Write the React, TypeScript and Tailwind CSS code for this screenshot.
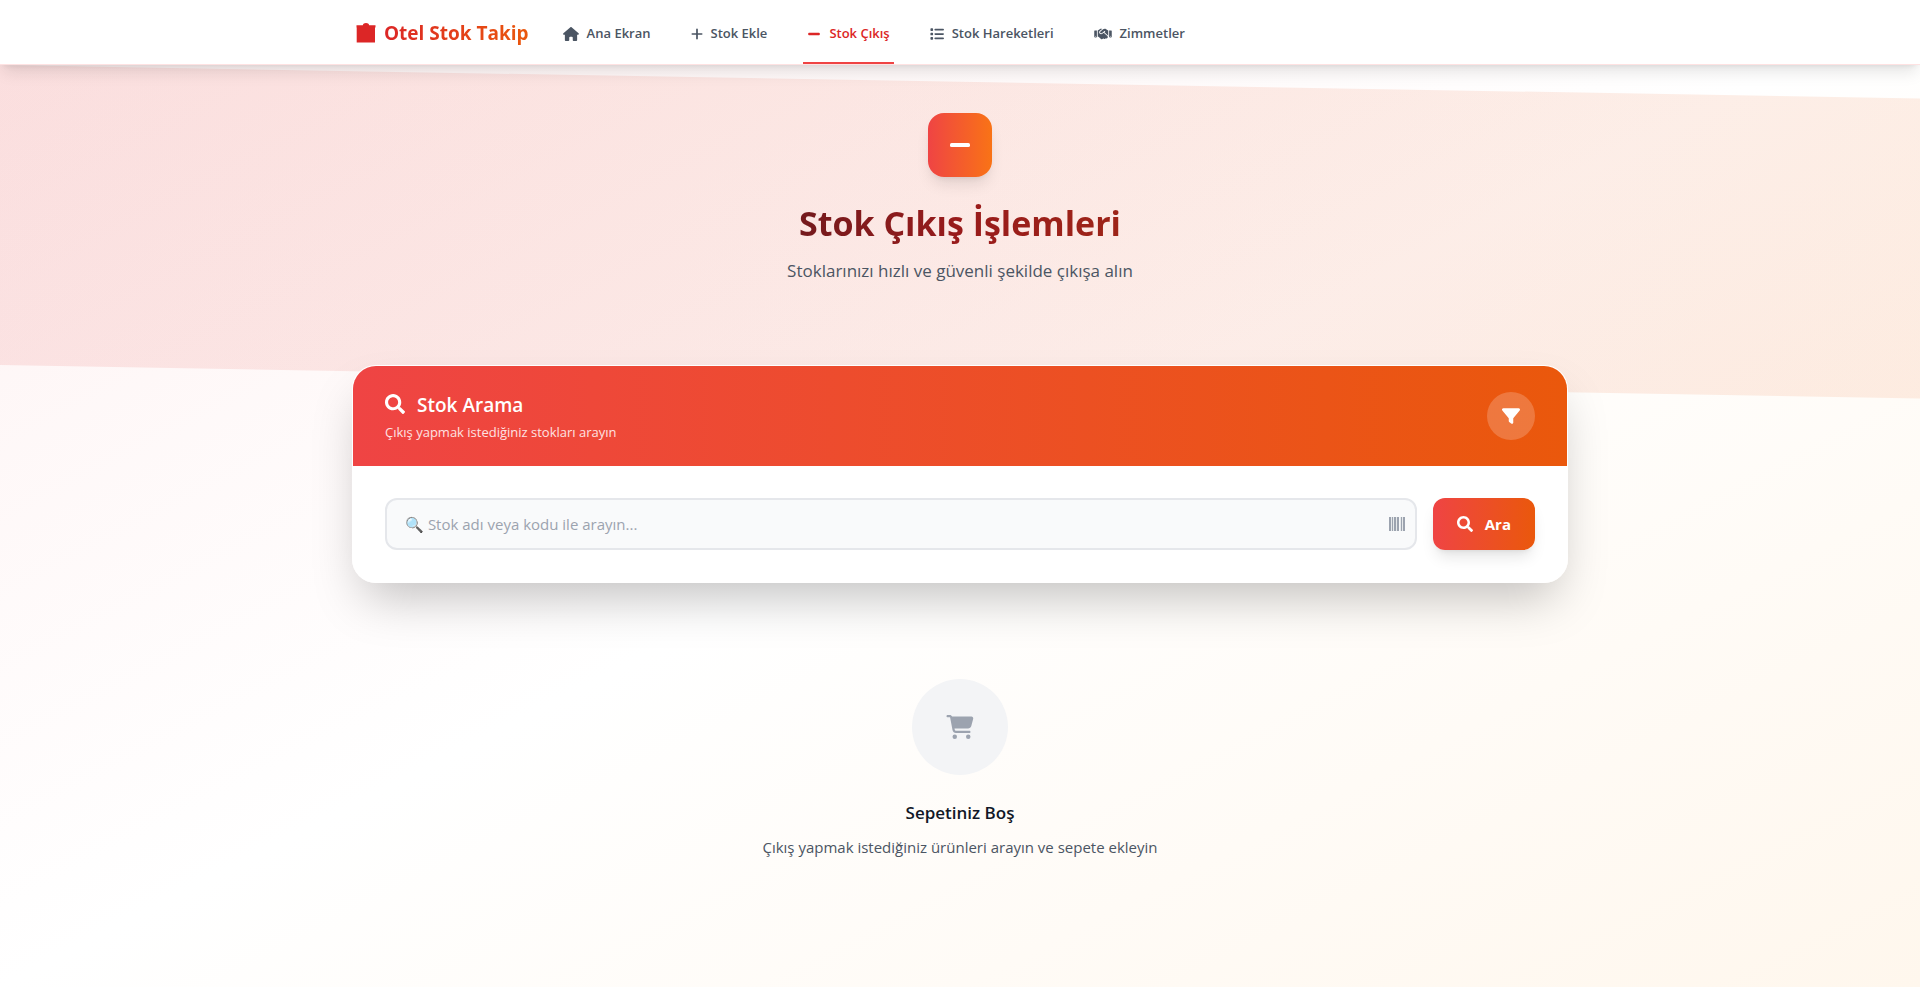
import { FaFilter, FaHandshake, FaHouse, FaList, FaPlus, FaCartShopping } from "react-icons/fa6";
import { FaSearch } from "react-icons/fa";

function Minus({ className }: { className?: string }) {
  return (
    <svg viewBox="0 0 24 24" className={className} fill="currentColor" aria-hidden="true">
      <rect x="2" y="10" width="20" height="4" rx="1.600" />
    </svg>
  );
}

function Barcode({ className }: { className?: string }) {
  return (
    <svg viewBox="0 0 16 14" className={className} fill="currentColor" aria-hidden="true">
      <path d="M0 0h2v14H0zM3 0h1v14H3zM5 0h2v14H5zM8 0h2v14H8zM12 0h1v14h-1zM14 0h2v14h-2z" />
      <path opacity=".2" d="M2 0h1v14H2zM4 0h1v14H4zM7 0h1v14H7zM11 0h1v14h-1zM13 0h1v14h-1z" />
    </svg>
  );
}

function BrandIcon() {
  return (
    <svg viewBox="0 0 20 20" className="h-5 w-5 text-[#dc2626]" fill="currentColor" aria-hidden="true">
      <path d="M.500 2.200h6.300C7.100.800 8.300 0 10 0s2.900.800 3.200 2.200H19.500v2L19 4.700V19.600H.700V4.700L.500 4.200z" />
    </svg>
  );
}

const links = [
  { label: "Ana Ekran", icon: FaHouse, size: "w-4", active: false },
  { label: "Stok Ekle", icon: FaPlus, size: "w-3", active: false },
  { label: "Stok Çıkış", icon: Minus, size: "w-[14px]", active: true },
  { label: "Stok Hareketleri", icon: FaList, size: "w-[14px]", active: false },
  { label: "Zimmetler", icon: FaHandshake, size: "w-[18px]", active: false },
];

function Nav() {
  return (
    <nav className="relative z-10 border-b border-[#fee2e2] bg-white/95 shadow-lg">
      <div className="mx-auto flex h-16 max-w-7xl items-center gap-[30px] px-8">
        <a href="#" className="flex items-center gap-2 pt-0.5 pl-1">
          <BrandIcon />
          <span className="bg-linear-to-r/srgb from-[#dc2626] to-[#ea580c] bg-clip-text text-[19px] leading-7 font-bold whitespace-nowrap text-transparent">
            Otel Stok Takip
          </span>
        </a>
        <div className="flex h-full gap-8">
          {links.map(({ label, icon: Icon, size, active }) => (
            <a
              key={label}
              href="#"
              aria-current={active ? "page" : undefined}
              className={
                active
                  ? "flex items-center gap-2 border-b-2 border-[#ef4444] px-1 pt-1.5 text-[13px] font-semibold whitespace-nowrap text-[#dc2626]"
                  : "flex items-center gap-2 border-b-2 border-transparent px-1 pt-1.5 text-[13px] font-semibold whitespace-nowrap text-[#4b5563]"
              }
            >
              <Icon className={`${size} h-[14px] shrink-0`} />
              {label}
            </a>
          ))}
        </div>
      </div>
    </nav>
  );
}

export default function App() {
  return (
    <div className="min-h-screen bg-linear-to-br/srgb from-[#fef2f2] via-white to-[#fff7ed] font-['Open_Sans','Noto_Sans',sans-serif]">
      <Nav />
      <header className="relative">
        <div className="absolute inset-0 origin-top-left skew-y-1 bg-linear-to-r/srgb from-[#dc2626]/10 to-[#ea580c]/10" />
        <div className="relative flex flex-col items-center px-8 pt-12 pb-20 text-center">
          <div className="mb-6 flex h-16 w-16 items-center justify-center rounded-2xl bg-linear-to-r/srgb from-[#ef4444] to-[#f97316] shadow-lg">
            <Minus className="h-6 w-6 text-white" />
          </div>
          <h1 className="mb-3 bg-linear-to-r/srgb from-[#741a1d] via-[#991b1b] to-[#9d2418] bg-clip-text text-[34px] leading-11 font-bold text-transparent">
            Stok Çıkış İşlemleri
          </h1>
          <p className="text-[17px] leading-7 text-[#4b5563]">Stoklarınızı hızlı ve güvenli şekilde çıkışa alın</p>
        </div>
      </header>
      <main className="relative mx-auto max-w-7xl px-8 pb-16">
        <section className="mb-8 overflow-hidden rounded-3xl border border-white/80 bg-white/90 shadow-2xl">
          <div className="flex items-center justify-between bg-linear-to-r/srgb from-[#ef4444] to-[#ea580c] px-8 py-6">
            <div>
              <h2 className="mb-0.5 flex items-start gap-3 text-[19px] leading-[30px] font-semibold text-white">
                <FaSearch className="mt-1 h-5 w-5" />
                Stok Arama
              </h2>
              <p className="text-[13px] leading-5 text-[#fee2e2]">Çıkış yapmak istediğiniz stokları arayın</p>
            </div>
            <button type="button" aria-label="Filtrele" className="flex h-12 w-12 items-center justify-center rounded-full bg-white/20 text-white">
              <FaFilter className="h-[18px] w-5" />
            </button>
          </div>
          <form className="flex gap-4 p-8" onSubmit={(e) => e.preventDefault()}>
            <div className="relative flex-1">
              <input
                type="text"
                aria-label="Stok adı veya kodu"
                placeholder="🔍 Stok adı veya kodu ile arayın..."
                className="h-[52px] w-full rounded-xl border-2 border-[#e5e7eb] bg-[#f9fafb] pr-12 pl-[18px] text-[15px] text-[#111827] placeholder:text-[#9ca3af]"
              />
              <Barcode className="absolute top-1/2 right-3 h-[14px] w-4 -translate-y-1/2 text-[#9ca3af]" />
            </div>
            <button
              type="submit"
              className="flex h-[52px] items-center gap-3 rounded-xl bg-linear-to-r/srgb from-[#ef4444] to-[#ea580c] px-6 text-[15px] font-bold text-white shadow-lg"
            >
              <FaSearch className="h-4 w-4" />
              Ara
            </button>
          </form>
        </section>
        <section className="flex flex-col items-center pt-16 text-center">
          <div className="mb-6 flex h-24 w-24 items-center justify-center rounded-full bg-[#f3f4f6] text-[#9ca3af]">
            <FaCartShopping className="h-6 w-7" />
          </div>
          <h3 className="mb-2 text-[17px] leading-7 font-semibold text-[#111827]">Sepetiniz Boş</h3>
          <p className="text-[15px] leading-6 text-[#4b5563]">Çıkış yapmak istediğiniz ürünleri arayın ve sepete ekleyin</p>
        </section>
      </main>
    </div>
  );
}
